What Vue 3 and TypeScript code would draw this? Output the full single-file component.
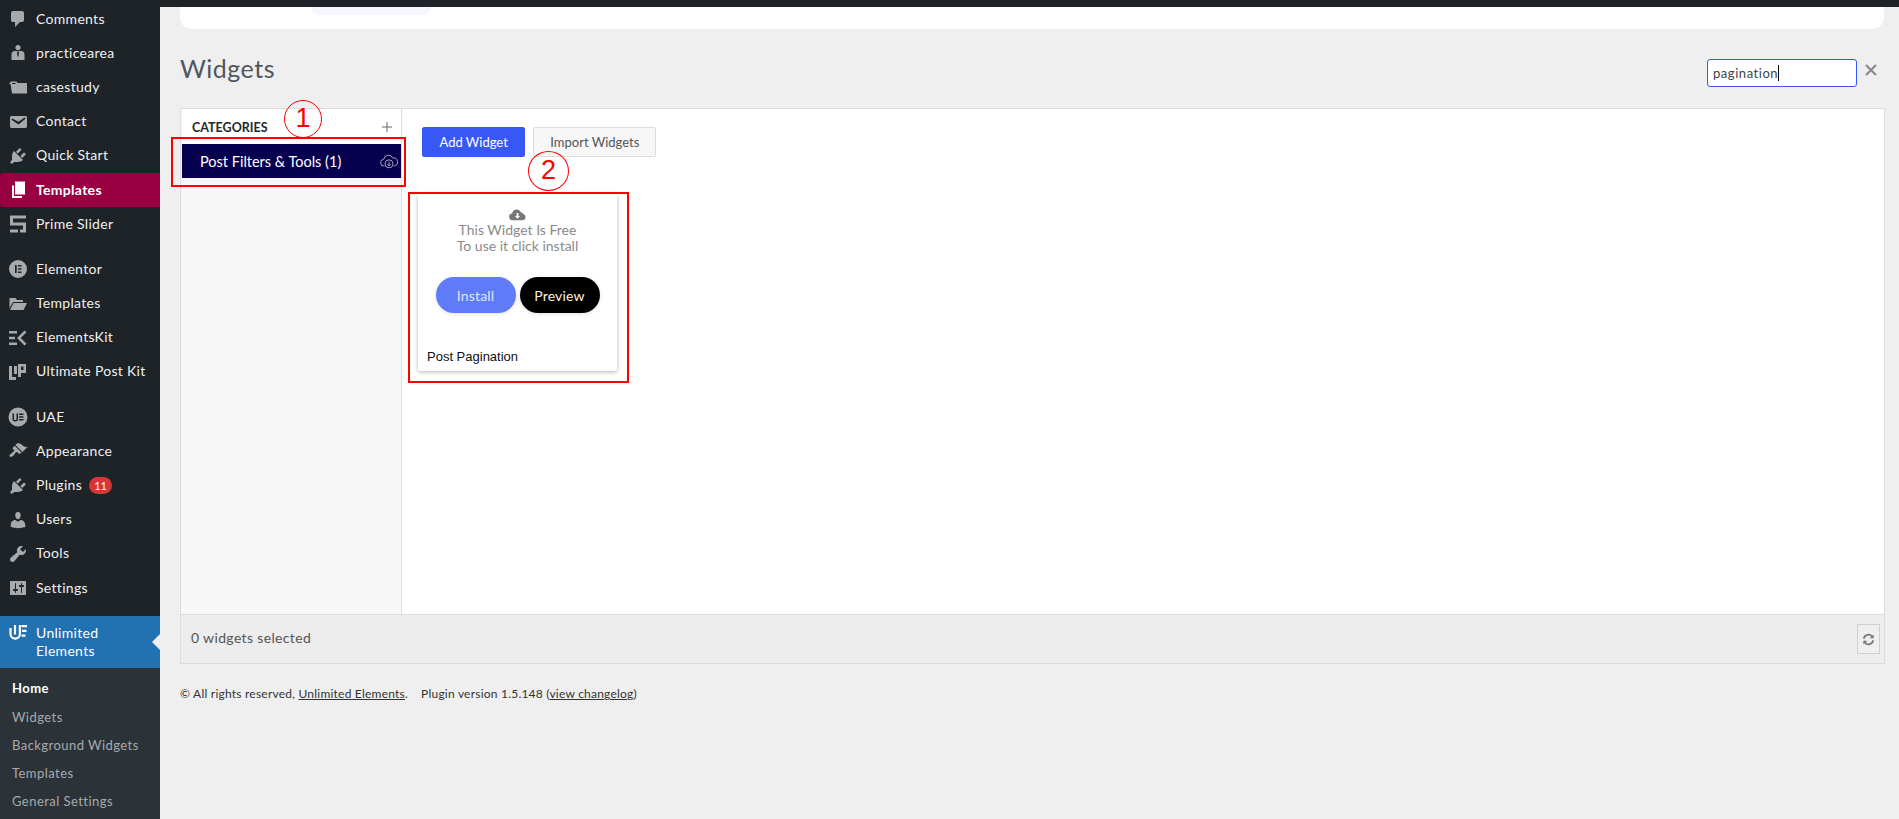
<script setup lang="ts">
// WP admin sidebar plus the Unlimited Elements widgets screen, with the red
// tutorial markers on top.

interface MenuItem {
  label: string
  d: string
  active?: boolean
  badge?: string
  gap?: boolean
}

const plug =
  'M13.11 4.36L9.87 7.6 8 5.73l3.24-3.24c.35-.34 1.05-.2 1.56.32.52.51.66 1.21.31 1.55zm-8 1.77l.91-1.12 9.01 9.01-1.19.84c-.71.71-2.63 1.16-3.82 1.16H6.14L4.9 17.26c-.59.59-1.54.59-2.12 0-.59-.58-.59-1.53 0-2.12l1.24-1.24v-3.88c0-1.13.4-3.19 1.09-3.89zm7.26 3.97l3.24-3.24c.34-.35 1.04-.21 1.55.31.52.51.66 1.21.31 1.55l-3.24 3.25z'
const user =
  'M10 9.25c-2.27 0-2.73-3.44-2.73-3.44C7 4.02 7.82 2 9.97 2c2.16 0 2.98 2.02 2.71 3.81 0 0-.41 3.44-2.68 3.44zm0 2.57L12.72 10c2.39 0 4.52 2.33 4.52 4.53v2.49s-3.65 1.13-7.24 1.13c-3.65 0-7.24-1.13-7.24-1.13v-2.49c0-2.25 1.94-4.48 4.47-4.48z'

const menu: MenuItem[] = [
  { label: 'Comments', d: 'M5 2h9q.82 0 1.41.59T16 4v7q0 .82-.59 1.41T14 13h-2l-5 5v-5H5q-.82 0-1.41-.59T3 11V4q0-.82.59-1.41T5 2z' },
  { label: 'practicearea', d: 'M10 2a2.6 2.6 0 110 5.2A2.6 2.6 0 0110 2zM6.5 8h7c1.6 0 3 1.5 3 3.2V17h-13v-5.8C3.500 9.500 4.900 8 6.500 8zM9 8.500l.5 5h1l.5-5z' },
  { label: 'casestudy', d: 'M3 4.500h5.500l1 1.500H18c.6 0 1 .4 1 1v9.500H4L2.500 7H1zM4 6.500l.3.500H8l-.5-1H4z' },
  { label: 'Contact', d: 'M3.87 4h13.25C18.370 4 19 4.590 19 5.790v8.420c0 1.190-.630 1.790-1.880 1.790H3.870c-1.250 0-1.880-.600-1.880-1.790V5.790c0-1.200.630-1.790 1.880-1.790zm6.620 8.600l6.740-5.530c.240-.200.430-.660.130-1.070-.290-.410-.820-.420-1.170-.170l-5.700 3.860L4.800 6.830c-.350-.250-.880-.240-1.170.170-.300.410-.110.870.130 1.070z' },
  { label: 'Quick Start', d: plug },
  { label: 'Templates', d: 'M7 1.500h10v13H7zM4 5.500h2V16h8v2H4z', active: true },
  { label: 'Prime Slider', d: 'M2 1.500h16v3H5v4h13v10h-6v-3h3v-4H2zM2 15.500h8v3H2z' },
  { label: 'Elementor', gap: true, d: 'M10 1a9 9 0 100 18 9 9 0 000-18zM7 6h1.700v8H7zM10 6h3.500v1.600H10zM10 9.200h3.500v1.600H10zM10 12.400h3.500V14H10z' },
  { label: 'Templates', d: 'M1.500 4h6l1.500 2h6v2H5L1.500 14.500zM5.500 9H19l-3.500 7H2z' },
  { label: 'ElementsKit', d: 'M1 3h8v2.500H1zM1 8.700h6v2.600H1zM1 14.500h8V17H1zM16.500 2.500l2 1.800L12.700 10l5.800 5.700-2 1.800L9 10z' },
  { label: 'Ultimate Post Kit', d: 'M1 4h3v11h4v3H1zM6 4h3v8H6zM10 2h8v9h-5v4h-3zM13 4.500V8h2.500V4.500z' },
  { label: 'UAE', gap: true, d: 'M10 .5a9.500 9.500 0 100 19 9.500 9.500 0 000-19zM4.500 6.500H6V12c0 .8.500 1 1.200 1s1.300-.2 1.300-1V6.500H10V12c0 1.800-1.200 2.500-2.800 2.500S4.500 13.800 4.500 12zM11 6.500h4.500V8H11zM11 9.300h4.500v1.400H11zM11 12h4.500v1.500H11z' },
  { label: 'Appearance', d: 'M14.480 11.060L7.410 3.990l1.500-1.500c.500-.560 2.300-.470 3.510.320 1.210.800 1.430 1.280 2.910 2.100 1.180.640 2.450 1.260 4.450.850zm-.710.710L6.700 4.700 4.930 6.470c-.390.390-.390 1.020 0 1.410l1.060 1.060c.390.390.390 1.030 0 1.420-.600.600-1.430 1.110-2.210 1.690-.350.260-.700.530-1.010.840C1.430 13.230.910 14.750 1.750 15.600c.840.840 2.360.320 3.700-1.030.310-.310.580-.650.840-1.010.570-.780 1.080-1.610 1.690-2.210.390-.390 1.020-.390 1.410 0l1.060 1.060c.390.390 1.020.390 1.410 0z' },
  { label: 'Plugins', d: plug, badge: '11' },
  { label: 'Users', d: user },
  { label: 'Tools', d: 'M16.680 9.770c-1.340 1.340-3.300 1.670-4.950.990l-5.410 6.520c-.990.990-2.590.990-3.580 0s-.990-2.590 0-3.570l6.520-5.420c-.680-1.650-.350-3.610.990-4.950 1.280-1.280 3.120-1.620 4.720-1.060l-2.890 2.890 2.820 2.820 2.860-2.870c.530 1.580.180 3.390-1.080 4.650z' },
  { label: 'Settings', d: 'M18 16V4c0-.550-.450-1-1-1H3c-.550 0-1 .450-1 1v12c0 .550.450 1 1 1h14c.550 0 1-.450 1-1zM8 11h1c.550 0 1 .450 1 1s-.450 1-1 1H8v1.500c0 .280-.220.500-.500.500s-.500-.220-.500-.500V13H6c-.550 0-1-.450-1-1s.450-1 1-1h1V5.500c0-.280.220-.500.500-.500s.500.220.500.500V11zm5-2h-1c-.550 0-1-.450-1-1s.450-1 1-1h1V5.500c0-.280.220-.500.500-.500s.500.220.500.500V7h1c.550 0 1 .450 1 1s-.450 1-1 1h-1v5.500c0 .280-.220.500-.500.500s-.500-.220-.500-.500V9z' },
]

const submenu = ['Home', 'Widgets', 'Background Widgets', 'Templates', 'General Settings']
</script>

<template>
  <div class="page">
    <aside class="side">
      <nav class="side__menu">
        <a
          v-for="item in menu"
          :key="item.label + item.d.length"
          class="item"
          :class="{ 'item--active': item.active, 'item--gap': item.gap }"
        >
          <svg class="item__icon" viewBox="0 0 20 20"><path :d="item.d" fill-rule="evenodd" /></svg>
          <span class="item__label">{{ item.label }}</span>
          <span v-if="item.badge" class="item__badge">{{ item.badge }}</span>
        </a>
      </nav>
      <div class="current">
        <svg class="current__icon" viewBox="0 0 20 20">
          <path class="current__u" d="M2.500 6v6a4.700 4.700 0 009.400 0V3M7 3v9.500" />
          <path d="M13.500 3H19v2.300h-5.500zM14 7.800h4.500v2.300H14zM13.500 12.500h4v2.300h-4z" />
        </svg>
        <span>Unlimited<br />Elements</span>
        <i class="current__arrow"></i>
      </div>
      <ul class="sub">
        <li v-for="(name, i) in submenu" :key="name" :class="{ 'sub__on': i === 0 }">{{ name }}</li>
      </ul>
    </aside>

    <main class="main">
      <div class="topbar"></div>
      <div class="notice"><span class="notice__pill"></span></div>

      <header class="head">
        <h1>Widgets</h1>
        <div class="search">
          <div class="search__box">pagination<i class="search__caret"></i></div>
          <svg class="search__x" viewBox="0 0 12 12"><path d="M1 1l10 10M11 1L1 11" /></svg>
        </div>
      </header>

      <section class="panel">
        <div class="panel__body">
          <div class="cats">
            <div class="cats__head">
              <b>CATEGORIES</b>
              <svg class="cats__plus" viewBox="0 0 12 12"><path d="M6 1v10M1 6h10" /></svg>
            </div>
            <div class="cats__row">
              <span>Post Filters &amp; Tools (1)</span>
              <svg class="cats__cloud" viewBox="0 0 18 16">
                <path d="M4.500 13H4a3.300 3.300 0 01-.3-6.600 4.700 4.700 0 019-1.400 3.500 3.500 0 011.500 8h-.7" />
                <circle cx="9" cy="10.800" r="4" />
                <path d="M9 8.500v4.300M7.300 11.100L9 12.800l1.700-1.700" />
              </svg>
            </div>
          </div>

          <div class="widgets">
            <div class="actions">
              <button type="button" class="btn btn--blue">Add Widget</button>
              <button type="button" class="btn">Import Widgets</button>
            </div>
            <article class="card">
              <div class="card__info">
                <svg class="card__cloud" viewBox="0 0 18 13">
                  <path fill-rule="evenodd" d="M4 12.500a3.500 3.500 0 01-.6-7A4.800 4.800 0 0112.500 4 3 3 0 0115 6a3.300 3.300 0 01-.8 6.500zM8 5v3.200H6.200L9 11l2.800-2.800H10V5z" />
                </svg>
                <p>This Widget Is Free<br />To use it click install</p>
              </div>
              <div class="card__btns">
                <button type="button" class="pill pill--install">Install</button>
                <button type="button" class="pill pill--preview">Preview</button>
              </div>
              <div class="card__title">Post Pagination</div>
            </article>
          </div>
        </div>
        <footer class="panel__foot">
          <span class="panel__count">0 widgets selected</span>
          <button type="button" class="refresh" aria-label="Refresh">
            <svg viewBox="0 0 14 14">
              <path d="M2 6a5 5 0 018.700-2.500L12 5M12 8a5 5 0 01-8.700 2.500L2 9" />
              <path class="refresh__tip" d="M12.500 1.500v4.200H8.300zM1.500 12.500V8.300h4.200z" />
            </svg>
          </button>
        </footer>
      </section>

      <p class="credit">
        © All rights reserved, <u>Unlimited Elements</u>.<span class="credit__gap"></span>Plugin version 1.5.148
        (<u>view changelog</u>)
      </p>

      <!-- tutorial markers drawn over the screenshot -->
      <div class="mark mark--box1"></div>
      <div class="mark mark--box2"></div>
      <div class="mark mark--num1">1</div>
      <div class="mark mark--num2">2</div>
    </main>
  </div>
</template>

<style scoped>
.page {
  display: flex;
  height: 819px;
  overflow: hidden;
  font-family: Lato, "Open Sans", sans-serif;
  background: #efefef;
}

/* sidebar */
.side {
  flex: 0 0 160px;
  background: #1d2327;
  padding-top: 2px;
  color: #f0f0f1;
}
.item {
  display: flex;
  align-items: center;
  height: 34.2px;
  font-size: 14px;
  letter-spacing: 0.3px;
}
.item--gap {
  margin-top: 11px;
}
.item--active {
  background: #980041;
  border-radius: 3px 0 0 3px;
  color: #fff;
  font-weight: 700;
}
.item__icon {
  flex: none;
  width: 20px;
  height: 20px;
  margin: 0 8px 0 8px;
  fill: #a7aaad;
}
.item--active .item__icon {
  fill: #fff;
}
.item__label {
  margin-bottom: 2px;
}
.item__badge {
  margin-left: 7px;
  min-width: 23px;
  height: 17px;
  line-height: 17px;
  border-radius: 9px;
  background: #d63638;
  color: #fff;
  font-size: 11px;
  text-align: center;
  letter-spacing: 0;
}
.current {
  position: relative;
  display: flex;
  align-items: center;
  gap: 8px;
  height: 52px;
  margin-top: 11px;
  padding-left: 8px;
  background: #2271b1;
  color: #fff;
  font-size: 14px;
  line-height: 18px;
  letter-spacing: 0.3px;
}
.current__icon {
  align-self: flex-start;
  flex: none;
  width: 20px;
  height: 20px;
  margin-top: 6px;
  fill: #fff;
}
.current__u {
  fill: none;
  stroke: #fff;
  stroke-width: 2.2;
}
.current__arrow {
  position: absolute;
  right: 0;
  top: 18px;
  border: 8px solid transparent;
  border-right-color: #efefef;
  border-left-width: 0;
}
.sub {
  list-style: none;
  margin: 0;
  padding: 6px 0 0 12px;
  height: 160px;
  background: #2c3338;
  color: #a7aaad;
  font-size: 13px;
  letter-spacing: 0.45px;
}
.sub li {
  height: 28px;
  line-height: 28px;
}
.sub li:first-child {
  height: 29px;
}
.sub__on {
  color: #fff;
  font-weight: 700;
}

/* main column */
.main {
  position: relative;
  flex: 1;
  min-width: 0;
  padding: 0 14px 0 20px;
}
.topbar {
  height: 7px;
  margin: 0 -14px 0 -20px;
  background: #1d2327;
}
.notice {
  height: 22px;
  margin-right: 1px;
  background: #fff;
  border-radius: 0 0 12px 12px;
}
.notice__pill {
  display: block;
  width: 120px;
  height: 8px;
  margin-left: 131px;
  background: #f5f6fe;
  border-radius: 0 0 8px 8px;
}
.head {
  display: flex;
  align-items: center;
  justify-content: space-between;
  box-sizing: border-box;
  height: 79px;
}
.head h1 {
  margin: 0 0 2px;
  font-size: 25px;
  font-weight: 400;
  letter-spacing: 0.5px;
  color: #50575e;
}
.search {
  display: flex;
  align-items: center;
  gap: 8px;
  margin: 9px 8px 0 0;
}
.search__box {
  box-sizing: border-box;
  width: 150px;
  height: 28px;
  padding-left: 5px;
  border: 1px solid #3858f6;
  border-radius: 3px;
  background: #fff;
  font-size: 13px;
  line-height: 26px;
  color: #3c434a;
  letter-spacing: 0.55px;
}
.search__caret {
  display: inline-block;
  width: 1px;
  height: 16px;
  background: #000;
  vertical-align: -3px;
}
.search__x {
  width: 12px;
  height: 12px;
  margin-top: -6px;
  fill: none;
  stroke: #8a8a8a;
  stroke-width: 2.2;
}

.panel {
  box-sizing: border-box;
  height: 556px;
  border: 1px solid #ddd;
  display: flex;
  flex-direction: column;
}
.panel__body {
  flex: 1;
  display: flex;
  min-height: 0;
  background: #fff;
}
.cats {
  box-sizing: border-box;
  flex: 0 0 221px;
  padding: 0 0 0 1px;
  background: #f7f7f7;
  border-right: 1px solid #ddd;
}
.cats__head {
  display: flex;
  align-items: center;
  justify-content: space-between;
  height: 35px;
  padding: 1px 8px 0 10px;
  box-sizing: border-box;
  background: #fff;
  font-size: 12.5px;
  color: #23282d;
}
.cats__plus {
  width: 12px;
  height: 12px;
  fill: none;
  stroke: #666;
}
.cats__row {
  display: flex;
  align-items: center;
  justify-content: space-between;
  height: 34px;
  padding: 0 3px 0 18px;
  background: #07004f;
  color: #fff;
  font-size: 14.5px;
}
.cats__cloud {
  width: 18px;
  height: 16px;
  fill: none;
  stroke: #c9c9c9;
  stroke-width: 0.8;
}
.cats__cloud circle {
  fill: #07004f;
}
.widgets {
  flex: 1;
  padding: 18px 0 0 20px;
}
.actions {
  display: flex;
  gap: 8px;
}
.btn {
  height: 30px;
  padding: 0 16px;
  border: 1px solid #ddd;
  border-radius: 2px;
  background: #f7f7f7;
  color: #555;
  font: 13px Lato, sans-serif;
}
.btn--blue {
  padding: 0 16.500px;
  border-color: #3858f6;
  background: #3858f6;
  color: #fff;
}
.card {
  box-sizing: border-box;
  display: flex;
  flex-direction: column;
  width: 199px;
  height: 177px;
  margin: 37px 0 0 -4px;
  background: #fff;
  border-radius: 2px;
  box-shadow: 0 1px 4px rgba(0, 0, 0, 0.3);
}
.card__info {
  padding-top: 14px;
  text-align: center;
  color: #8a8a8a;
  font-size: 14px;
  line-height: 16px;
}
.card__info p {
  margin: 0;
}
.card__cloud {
  display: block;
  width: 17px;
  height: 13px;
  margin: 0 auto 1px;
  fill: #777;
}
.card__btns {
  display: flex;
  justify-content: center;
  gap: 4px;
  margin-top: 23px;
}
.pill {
  width: 80px;
  height: 36px;
  border: 0;
  border-radius: 18px;
  font: 14px Lato, sans-serif;
  letter-spacing: 0.2px;
  box-shadow: 0 1px 4px rgba(0, 0, 0, 0.12);
}
.pill--install {
  background: #5f7bf8;
  color: #dfe4ff;
}
.pill--preview {
  background: #000;
  color: #fff3d6;
}
.card__title {
  margin-top: auto;
  padding: 0 0 7px 9px;
  font: 13px "Liberation Sans", Arial, sans-serif;
  color: #111;
}
.panel__foot {
  flex: 0 0 48px;
  display: flex;
  align-items: center;
  justify-content: space-between;
  padding: 0 4px 0 10px;
  background: #ededed;
  border-top: 1px solid #ddd;
  font-size: 14px;
  letter-spacing: 0.35px;
  color: #555;
}
.panel__count {
  margin-bottom: 3px;
}
.refresh {
  width: 23px;
  height: 30px;
  padding: 0;
  background: #efefef;
  border: 1px solid #d0d0d0;
}
.refresh svg {
  display: block;
  width: 13px;
  height: 13px;
  margin: auto;
  fill: none;
  stroke: #777;
  stroke-width: 2;
}
.refresh .refresh__tip {
  fill: #777;
  stroke: none;
}
.credit {
  margin: 22px 0 0;
  font-size: 12px;
  letter-spacing: 0.22px;
  color: #333;
}
.credit__gap {
  display: inline-block;
  width: 13px;
}

/* red markers */
.mark {
  position: absolute;
  box-sizing: border-box;
  color: #f00;
}
.mark--box1,
.mark--box2 {
  border: 2px solid #f00;
}
.mark--box1 {
  left: 11px;
  top: 137px;
  width: 235px;
  height: 50px;
}
.mark--box2 {
  left: 248px;
  top: 192px;
  width: 221px;
  height: 191px;
}
.mark--num1,
.mark--num2 {
  border: 1.500px solid #f00;
  border-radius: 50%;
  text-align: center;
  font-family: "Liberation Sans", sans-serif;
}
.mark--num1 {
  left: 124px;
  top: 100px;
  width: 38px;
  height: 38px;
  font-size: 27px;
  line-height: 35px;
}
.mark--num2 {
  left: 368px;
  top: 151px;
  width: 41px;
  height: 40px;
  font-size: 27px;
  line-height: 37px;
}
</style>
